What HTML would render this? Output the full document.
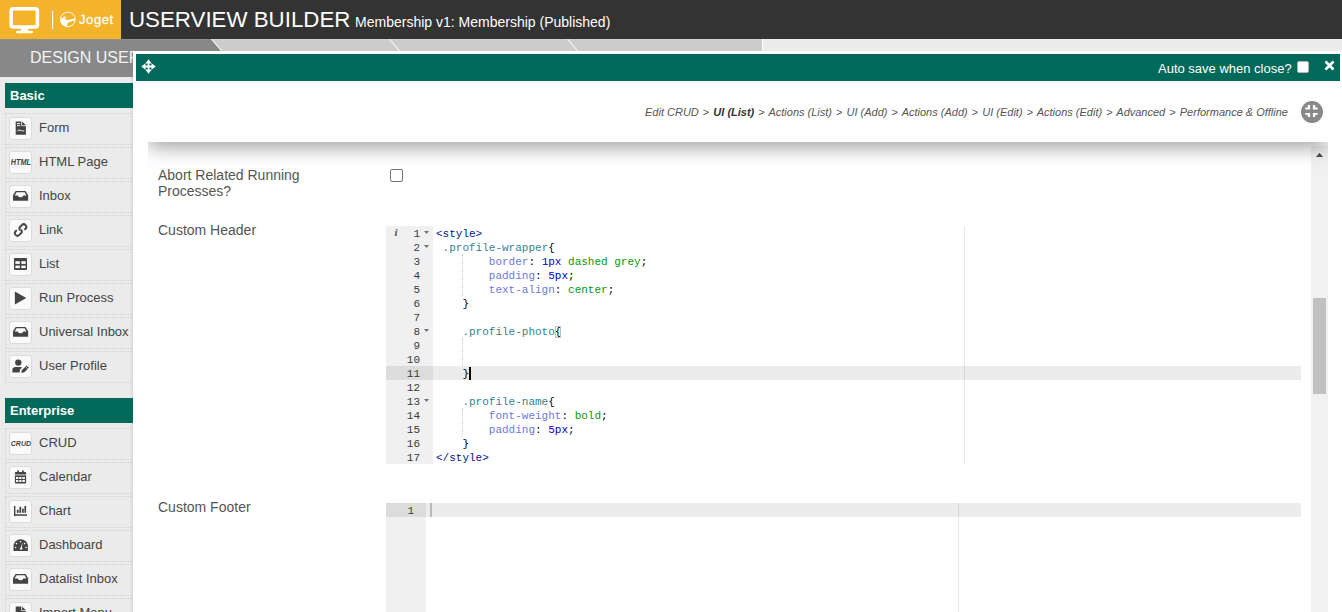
<!DOCTYPE html>
<html><head><meta charset="utf-8">
<style>
*{margin:0;padding:0;box-sizing:border-box}
html,body{width:1342px;height:612px;overflow:hidden;background:#fff;font-family:"Liberation Sans",sans-serif}
.abs{position:absolute}
#hdr{left:0;top:0;width:1342px;height:39px;background:#333}
#logo{left:0;top:0;width:121px;height:39px;background:#f3b32a}
#title{left:129px;top:7px;color:#fff;font-size:22.3px;white-space:nowrap;line-height:26px}
#title small{font-size:14px;margin-left:-1.5px}
#tabs{left:0;top:39px;width:1342px;height:38px}
#tabtxt{left:30px;top:46.5px;color:#f4f4f4;font-size:16px;white-space:nowrap;line-height:22px}
#side{left:0;top:77px;width:133px;height:535px;background:#ebebeb}
#sideedge{left:130px;top:77px;width:3px;height:535px;background:linear-gradient(to right,rgba(0,0,0,0.0),rgba(0,0,0,0.09))}
.cat{position:absolute;left:5px;width:128px;height:25px;background:#00695a;color:#fff;font-weight:bold;font-size:13px;line-height:25px;padding-left:5px}
.item{position:absolute;left:5px;width:128px;height:32px;border:1px dotted #d2d2d2;border-right:none}
.item .ic{position:absolute;left:3px;top:3px;width:23px;height:23px;background:#fafafa;border:1px solid #dcdcdc;border-radius:3px}
.item .ic svg{position:absolute;left:1px;top:0}
.item .lb{position:absolute;left:33px;top:0;line-height:28px;font-size:13px;color:#444;white-space:nowrap}
#dlg{left:133px;top:51px;width:1209px;height:561px;background:#fff}
#dlghd{left:136px;top:54px;width:1204px;height:27px;background:#00695a}
#autosave{left:1158px;top:61px;color:#fff;font-size:13px;line-height:16px;white-space:nowrap}
#cb1{left:1296.5px;top:60.5px;width:12px;height:12px;background:#fff;border-radius:2px;border:1px solid #b5b5b5}
#bc{right:54px;top:105px;font-size:11px;font-style:italic;color:#555;white-space:nowrap;line-height:14px}
#bc b{color:#333}
#bc i{font-style:normal;padding:0 1px}
#collapse{left:1301px;top:101px;width:22px;height:22px;border-radius:50%;background:#888}
#panel{left:148px;top:142px;width:1180px;height:470px;background:#fff;overflow:hidden}
#panelsh{left:148px;top:142px;width:1180px;height:60px;overflow:hidden}
#panelsh div{position:absolute;left:0;top:-20px;width:1180px;height:20px;background:#fff;box-shadow:0 2px 22px rgba(0,0,0,0.5)}
#sb{left:1311px;top:146px;width:17px;height:466px;background:#f1f1f1}
#thumb{left:1313px;top:298px;width:13px;height:96px;background:#c1c1c1}
.lbl{position:absolute;font-size:14px;color:#555;line-height:16px}
#cbx{left:390px;top:169px;width:13px;height:13px;border:1px solid #767676;border-radius:2px;background:#fff}
/* ace */
.ace{position:absolute;background:#fff;font-family:"Liberation Mono",monospace;font-size:11px;overflow:hidden}
.gut{position:absolute;left:0;top:0;background:#f0f0f0;color:#333}
.gl{color:#3a3a3a}
.gl{position:absolute;height:14px;line-height:14px;text-align:right}
.cl{position:absolute;height:14px;line-height:14px;white-space:pre;color:#000}
.tg{color:#00168e}
.vr{color:#318495}
.ty{color:#6d79de}
.nm{color:#0000cd}
.cs{color:#06960e}
.bm{outline:1px solid #c0c0c0;outline-offset:-1px}
</style></head><body>
<div id="hdr" class="abs"></div>
<div id="logo" class="abs">
<svg width="121" height="39" viewBox="0 0 121 39">
<rect x="11.2" y="8.8" width="26.2" height="18.2" rx="2" fill="none" stroke="#fff" stroke-width="3.6"/>
<rect x="21" y="28" width="7" height="3" fill="#fff"/>
<rect x="16" y="30.8" width="17" height="2.4" rx="1.2" fill="#fff"/>
<rect x="52" y="11" width="1.2" height="18" fill="#fff" opacity="0.95"/>
<circle cx="67.85" cy="19.35" r="7.3" fill="none" stroke="#fff" stroke-width="1"/>
<path d="M60.6 21.5 C60.8 18.5 63 16.6 66.8 16.2 C65.2 17.2 64.6 18.6 65.4 19.6 C66.5 20.6 70 19.8 74.9 18.6 L75 20.2 C71.5 21.3 68.5 22 67.5 23.5 C67 24.5 67.2 25.8 67.8 26.7 C64 26.5 61 24.5 60.6 21.5 Z" fill="#fff"/>
<text x="79" y="24.2" font-family="Liberation Sans" font-size="13" fill="#fff" stroke="#fff" stroke-width="0.3" letter-spacing="0.6">Joget</text>
</svg>
</div>
<div id="title" class="abs">USERVIEW BUILDER <small>Membership v1: Membership (Published)</small></div>
<div id="tabs" class="abs">
<svg width="1342" height="38" viewBox="0 0 1342 38">
<rect x="0" y="0" width="1342" height="38" fill="#ececec"/>
<polygon points="0,0 762,0 762,38 0,38" fill="#cccccc"/>
<polygon points="0,0 211.5,0 244,38 0,38" fill="#888888"/>
<line x1="211.5" y1="0" x2="244" y2="38" stroke="#f0f0f0" stroke-width="1.2"/>
<line x1="389.2" y1="0" x2="422.3" y2="38" stroke="#f0f0f0" stroke-width="1.2"/>
<line x1="567.5" y1="0" x2="600" y2="38" stroke="#f0f0f0" stroke-width="1.2"/>
<rect x="762" y="0" width="1" height="38" fill="#fff"/>
<rect x="0" y="0" width="1342" height="1" fill="#fff" opacity="0.07"/>
</svg>
</div>
<div id="tabtxt" class="abs">DESIGN USERVIEW</div>
<div id="side" class="abs"></div>
<div id="sideedge" class="abs"></div>

<!--SIDE-->
<div class="cat" style="top:83px">Basic</div>
<div class="item" style="top:113px"><div class="ic"><svg width="20" height="20" viewBox="0 0 20 20"><path d="M4.7 3.4H10.4L14.9 7.9V16.7H4.7Z" fill="#444"/><path d="M11.1 3.5V7.2H14.8Z" fill="#444"/><path d="M10.6 3.4V7.7H14.9" stroke="#fafafa" stroke-width="0.8" fill="none"/><rect x="6" y="5.1" width="3.2" height="1" fill="#fafafa"/><rect x="6" y="7.1" width="3.2" height="1" fill="#fafafa"/><path d="M6.3 13.3 L7.9 11.6 L8.9 12.9 L10.3 12.5 L13.1 13.1" stroke="#fafafa" stroke-width="0.9" fill="none"/></svg></div><div class="lb">Form</div></div>
<div class="item" style="top:147px"><div class="ic"><svg width="20" height="20" viewBox="0 0 20 20"><text x="-0.3" y="13.1" font-family="Liberation Sans" font-weight="bold" font-style="italic" font-size="8.4" fill="#444" textLength="20.3" lengthAdjust="spacingAndGlyphs">HTML</text></svg></div><div class="lb">HTML Page</div></div>
<div class="item" style="top:181px"><div class="ic"><svg width="20" height="20" viewBox="0 0 20 20"><path d="M4.6 4.9H14.5L17.1 9.3V14.8H2V9.3Z" fill="#444"/><path d="M5.5 6.2H13.6L15.5 9.4H12.3Q11.8 11.3 9.55 11.3Q7.3 11.3 6.8 9.4H3.6Z" fill="#fafafa"/></svg></div><div class="lb">Inbox</div></div>
<div class="item" style="top:215px"><div class="ic"><svg width="20" height="20" viewBox="0 0 20 20"><g transform="rotate(-45 9.6 10)" fill="none" stroke="#444" stroke-width="1.9"><path d="M12.4 12.6H14A2.6 2.6 0 0 0 14 7.4H11.6A2.6 2.6 0 0 0 9.1 10"/><path d="M6.8 7.4H5.2A2.6 2.6 0 0 0 5.2 12.6H7.6A2.6 2.6 0 0 0 10.1 10"/></g></svg></div><div class="lb">Link</div></div>
<div class="item" style="top:249px"><div class="ic"><svg width="20" height="20" viewBox="0 0 20 20"><rect x="3" y="4" width="13" height="11.9" rx="0.8" fill="#444"/><g fill="#fafafa"><rect x="4.4" y="7.2" width="4.4" height="2.7"/><rect x="10.3" y="7.2" width="4.4" height="2.7"/><rect x="4.4" y="11.6" width="4.4" height="2.5"/><rect x="10.3" y="11.6" width="4.4" height="2.5"/></g></svg></div><div class="lb">List</div></div>
<div class="item" style="top:283px"><div class="ic"><svg width="20" height="20" viewBox="0 0 20 20"><path d="M3.9 3.6 L15.3 10.1 L3.9 16.6 Z" fill="#444"/></svg></div><div class="lb">Run Process</div></div>
<div class="item" style="top:317px"><div class="ic"><svg width="20" height="20" viewBox="0 0 20 20"><path d="M4.6 4.9H14.5L17.1 9.3V14.8H2V9.3Z" fill="#444"/><path d="M5.5 6.2H13.6L15.5 9.4H12.3Q11.8 11.3 9.55 11.3Q7.3 11.3 6.8 9.4H3.6Z" fill="#fafafa"/></svg></div><div class="lb">Universal Inbox</div></div>
<div class="item" style="top:351px"><div class="ic"><svg width="20" height="20" viewBox="0 0 20 20"><circle cx="7.3" cy="6.6" r="3.2" fill="#444"/><path d="M1.4 16.6V13.6C1.4 11.9 2.7 10.9 4.4 10.9H9.6C10.2 10.9 10.7 11.1 11.1 11.4L9 13.5L8.6 16.6Z" fill="#444"/><path d="M10.4 16.8L10.9 14.3L15.7 9.5L17.9 11.7L13.1 16.4Z" fill="#444"/><path d="M14.6 10.6L16.8 12.8" stroke="#fafafa" stroke-width="0.7"/></svg></div><div class="lb">User Profile</div></div>
<div class="cat" style="top:398px">Enterprise</div>
<div class="item" style="top:428px"><div class="ic"><svg width="20" height="20" viewBox="0 0 20 20"><text x="-0.2" y="13.2" font-family="Liberation Sans" font-weight="bold" font-style="italic" font-size="7.6" fill="#444" textLength="20.2" lengthAdjust="spacingAndGlyphs">CRUD</text></svg></div><div class="lb">CRUD</div></div>
<div class="item" style="top:462px"><div class="ic"><svg width="20" height="20" viewBox="0 0 20 20"><rect x="3.9" y="4.9" width="11.2" height="11.7" rx="0.8" fill="#444"/><rect x="6.2" y="3.5" width="1.8" height="2" fill="#444"/><rect x="11" y="3.5" width="1.8" height="2" fill="#444"/><rect x="3.9" y="7" width="11.2" height="1.8" fill="#9a9a9a"/><g fill="#fafafa"><rect x="5" y="10" width="2.3" height="2"/><rect x="8.2" y="10" width="2.3" height="2"/><rect x="11.4" y="10" width="2.5" height="2"/><rect x="5" y="13" width="2.3" height="2"/><rect x="8.2" y="13" width="2.3" height="2"/><rect x="11.4" y="13" width="2.5" height="2"/></g></svg></div><div class="lb">Calendar</div></div>
<div class="item" style="top:496px"><div class="ic"><svg width="20" height="20" viewBox="0 0 20 20"><rect x="3" y="4.9" width="1.4" height="9.9" fill="#444"/><rect x="3" y="13.3" width="13" height="1.5" fill="#444"/><rect x="5.9" y="8.8" width="1.8" height="3" fill="#444"/><rect x="8.4" y="5.8" width="1.8" height="6" fill="#444"/><rect x="11.1" y="7.7" width="1.7" height="4.1" fill="#444"/><rect x="13.4" y="4.9" width="1.7" height="6.9" fill="#444"/></svg></div><div class="lb">Chart</div></div>
<div class="item" style="top:530px"><div class="ic"><svg width="20" height="20" viewBox="0 0 20 20"><path d="M2.5 15.9 V11.4 A7.2 7.2 0 0 1 16.9 11.4 V15.9Z" fill="#444"/><g fill="#fafafa"><circle cx="5.5" cy="8.6" r="0.8"/><circle cx="4.6" cy="12.5" r="0.8"/><circle cx="9.5" cy="6.8" r="0.8"/><circle cx="13.6" cy="8.6" r="0.8"/><circle cx="15" cy="12.5" r="0.8"/><path d="M8.6 14.6 Q8.9 12.6 9.9 12.3 L11.6 6.8 L11 12.6 Q11.9 13.4 11.3 14.6Z"/></g></svg></div><div class="lb">Dashboard</div></div>
<div class="item" style="top:564px"><div class="ic"><svg width="20" height="20" viewBox="0 0 20 20"><path d="M4.6 4.9H14.5L17.1 9.3V14.8H2V9.3Z" fill="#444"/><path d="M5.5 6.2H13.6L15.5 9.4H12.3Q11.8 11.3 9.55 11.3Q7.3 11.3 6.8 9.4H3.6Z" fill="#fafafa"/></svg></div><div class="lb">Datalist Inbox</div></div>
<div class="item" style="top:598px"><div class="ic"><svg width="20" height="20" viewBox="0 0 20 20"><path d="M4.7 3.4H10.4L14.9 7.9V16.7H4.7Z" fill="#444"/><path d="M11.1 3.5V7.2H14.8Z" fill="#444"/><path d="M10.6 3.4V7.7H14.9" stroke="#fafafa" stroke-width="0.8" fill="none"/></svg></div><div class="lb">Import Menu</div></div>
<!--/SIDE-->

<div id="dlg" class="abs"></div>
<div id="dlghd" class="abs"></div>
<svg class="abs" style="left:141px;top:58.5px" width="15" height="15" viewBox="0 0 15 15"><path d="M7.5 0.3 L10.7 4.5 H8.4 V6.6 H10.5 V4.3 L14.7 7.5 L10.5 10.7 V8.4 H8.4 V10.5 H10.7 L7.5 14.7 L4.3 10.5 H6.6 V8.4 H4.5 V10.7 L0.3 7.5 L4.5 4.3 V6.6 H6.6 V4.5 H4.3 Z" fill="#fff"/></svg>
<div id="autosave" class="abs">Auto save when close?</div>
<div id="cb1" class="abs"></div>
<svg class="abs" style="left:1324px;top:60px" width="11" height="11" viewBox="0 0 11 11"><path d="M1.5 1.5 L9.5 9.5 M9.5 1.5 L1.5 9.5" stroke="#fff" stroke-width="2.6"/></svg>

<div id="bc" class="abs">Edit CRUD <i>&gt;</i> <b>UI (List)</b> <i>&gt;</i> Actions (List) <i>&gt;</i> UI (Add) <i>&gt;</i> Actions (Add) <i>&gt;</i> UI (Edit) <i>&gt;</i> Actions (Edit) <i>&gt;</i> Advanced <i>&gt;</i> Performance &amp; Offline</div>
<div id="collapse" class="abs"><svg width="22" height="22" viewBox="0 0 22 22"><g fill="#fff"><path d="M6.8 4.1H9.1V8.4H4.3V6.6H6.8Z"/><path d="M14.2 4.1H11.9V8.4H16.7V6.6H14.2Z"/><path d="M6.8 16.1H9.1V11.9H4.3V13.8H6.8Z"/><path d="M14.2 16.1H11.9V11.9H16.7V13.8H14.2Z"/></g></svg></div>

<div id="panel" class="abs"></div>
<div id="sb" class="abs"></div>
<div id="thumb" class="abs"></div>
<svg class="abs" style="left:1314px;top:151px" width="11" height="7" viewBox="0 0 11 7"><path d="M2 6 L5.5 1.8 L9 6z" fill="#505050"/></svg>
<div id="panelsh" class="abs"><div></div></div>


<div class="lbl" style="left:158px;top:167px">Abort Related Running<br>Processes?</div>
<div id="cbx" class="abs"></div>
<div class="lbl" style="left:158px;top:222px">Custom Header</div>
<div class="lbl" style="left:158px;top:499px">Custom Footer</div>
<div class="ace" style="left:386px;top:226px;width:915px;height:238px">
<div class="gut" style="width:47px;height:238px"></div>
<div style="position:absolute;left:0;top:140px;width:47px;height:14px;background:#dcdcdc"></div>
<div style="position:absolute;left:578px;top:0;width:1px;height:238px;background:#e8e8e8"></div>
<div style="position:absolute;left:47px;top:140px;width:868px;height:14px;background:rgba(0,0,0,0.075)"></div>
<div style="position:absolute;left:76px;top:28px;width:0;height:42px;border-left:1px dotted #c8c8c8"></div>
<div style="position:absolute;left:76px;top:112px;width:0;height:28px;border-left:1px dotted #c8c8c8"></div>
<div style="position:absolute;left:76px;top:182px;width:0;height:28px;border-left:1px dotted #c8c8c8"></div>
<div class="gl" style="top:1px;right:881px;width:40px">1</div>
<svg style="position:absolute;left:38px;top:5px" width="5" height="3" viewBox="0 0 5 3"><path d="M0 0H5L2.5 3z" fill="#707070"/></svg>
<div class="cl" style="left:50px;top:1px"><span class="tg">&lt;style&gt;</span></div>
<div class="gl" style="top:15px;right:881px;width:40px">2</div>
<svg style="position:absolute;left:38px;top:19px" width="5" height="3" viewBox="0 0 5 3"><path d="M0 0H5L2.5 3z" fill="#707070"/></svg>
<div class="cl" style="left:50px;top:15px"> <span class="vr">.profile-wrapper</span>{</div>
<div class="gl" style="top:29px;right:881px;width:40px">3</div>
<div class="cl" style="left:50px;top:29px">        <span class="ty">border</span>: <span class="nm">1px</span> <span class="cs">dashed grey</span>;</div>
<div class="gl" style="top:43px;right:881px;width:40px">4</div>
<div class="cl" style="left:50px;top:43px">        <span class="ty">padding</span>: <span class="nm">5px</span>;</div>
<div class="gl" style="top:57px;right:881px;width:40px">5</div>
<div class="cl" style="left:50px;top:57px">        <span class="ty">text-align</span>: <span class="cs">center</span>;</div>
<div class="gl" style="top:71px;right:881px;width:40px">6</div>
<div class="cl" style="left:50px;top:71px">    }</div>
<div class="gl" style="top:85px;right:881px;width:40px">7</div>
<div class="cl" style="left:50px;top:85px"></div>
<div class="gl" style="top:99px;right:881px;width:40px">8</div>
<svg style="position:absolute;left:38px;top:103px" width="5" height="3" viewBox="0 0 5 3"><path d="M0 0H5L2.5 3z" fill="#707070"/></svg>
<div class="cl" style="left:50px;top:99px">    <span class="vr">.profile-photo</span><span class="bm">{</span></div>
<div class="gl" style="top:113px;right:881px;width:40px">9</div>
<div class="cl" style="left:50px;top:113px"></div>
<div class="gl" style="top:127px;right:881px;width:40px">10</div>
<div class="cl" style="left:50px;top:127px"></div>
<div class="gl" style="top:141px;right:881px;width:40px">11</div>
<div class="cl" style="left:50px;top:141px">    }</div>
<div class="gl" style="top:155px;right:881px;width:40px">12</div>
<div class="cl" style="left:50px;top:155px"></div>
<div class="gl" style="top:169px;right:881px;width:40px">13</div>
<svg style="position:absolute;left:38px;top:173px" width="5" height="3" viewBox="0 0 5 3"><path d="M0 0H5L2.5 3z" fill="#707070"/></svg>
<div class="cl" style="left:50px;top:169px">    <span class="vr">.profile-name</span>{</div>
<div class="gl" style="top:183px;right:881px;width:40px">14</div>
<div class="cl" style="left:50px;top:183px">        <span class="ty">font-weight</span>: <span class="cs">bold</span>;</div>
<div class="gl" style="top:197px;right:881px;width:40px">15</div>
<div class="cl" style="left:50px;top:197px">        <span class="ty">padding</span>: <span class="nm">5px</span>;</div>
<div class="gl" style="top:211px;right:881px;width:40px">16</div>
<div class="cl" style="left:50px;top:211px">    }</div>
<div class="gl" style="top:225px;right:881px;width:40px">17</div>
<div class="cl" style="left:50px;top:225px"><span class="tg">&lt;/style&gt;</span></div>
<div style="position:absolute;left:8.5px;top:-1px;height:14px;line-height:14px;font-family:'Liberation Serif',serif;font-style:italic;font-weight:bold;font-size:11px;color:#555">i</div>
<div style="position:absolute;left:83px;top:141px;width:2px;height:13px;background:#000"></div>
</div>
<div class="ace" style="left:386px;top:503px;width:915px;height:109px">
<div class="gut" style="width:40px;height:109px"></div>
<div style="position:absolute;left:0;top:0;width:40px;height:14px;background:#dcdcdc"></div>
<div style="position:absolute;left:572px;top:0;width:1px;height:109px;background:#e8e8e8"></div>
<div style="position:absolute;left:40px;top:0;width:875px;height:14px;background:rgba(0,0,0,0.075)"></div>
<div class="gl" style="top:1px;right:887px;width:30px">1</div>
<div style="position:absolute;left:44px;top:0;width:2px;height:14px;background:#b9b9b9"></div>
</div>
</body></html>
